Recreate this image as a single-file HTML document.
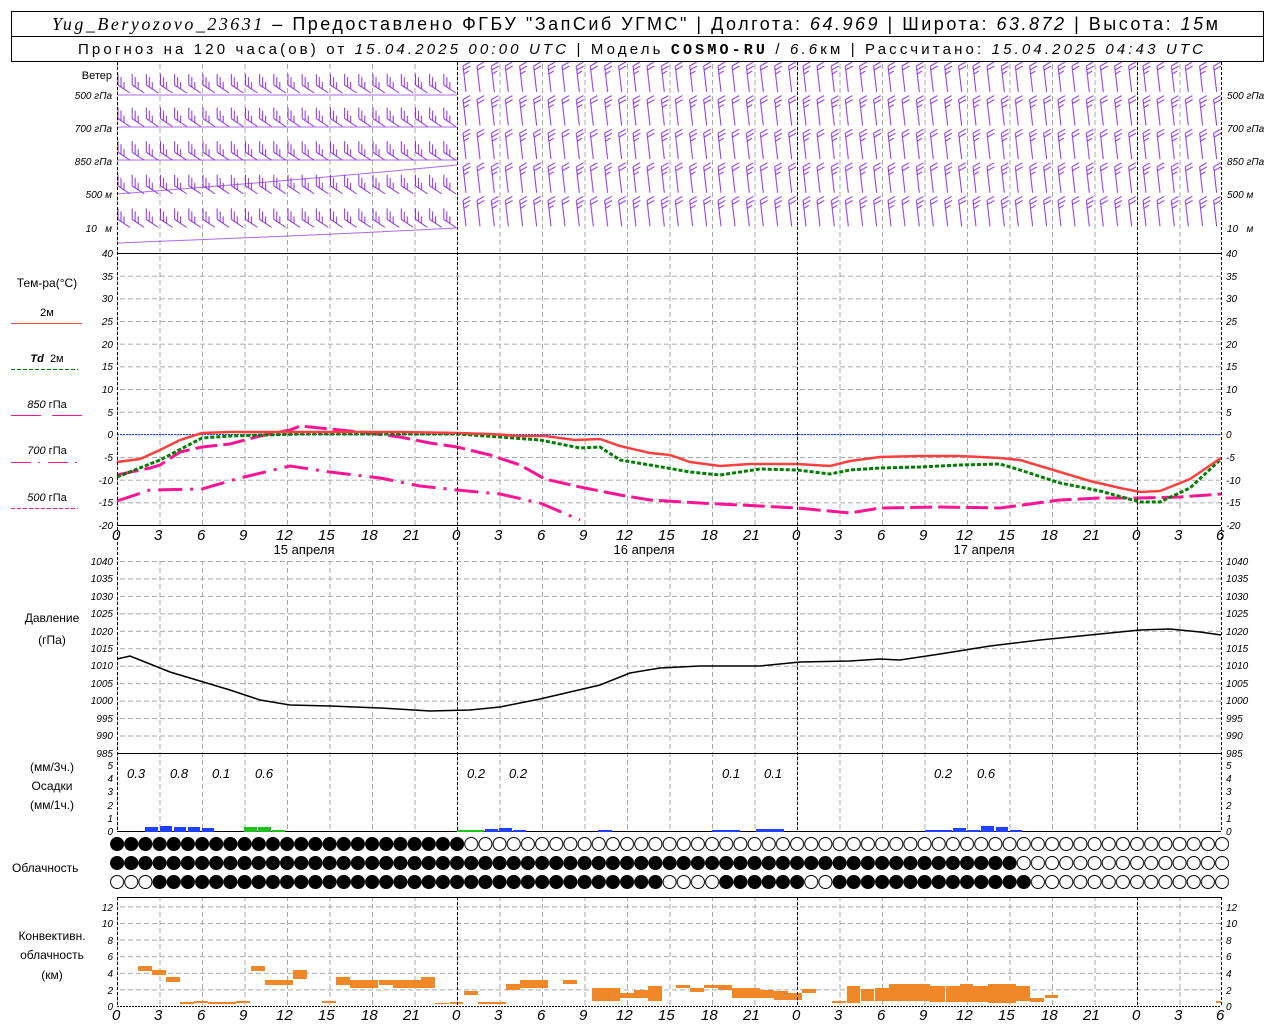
<!DOCTYPE html>
<html><head><meta charset="utf-8"><style>
html,body{margin:0;padding:0;background:#fff;}
svg{display:block;}
text{font-family:"Liberation Sans",sans-serif;fill:#000;}
.it{font-style:italic;}
.ax{font-size:10px;font-style:italic;}
.lb{font-size:12px;}
.hr{font-size:15px;font-style:italic;}
</style></head><body>
<svg width="1280" height="1024" viewBox="0 0 1280 1024" xmlns="http://www.w3.org/2000/svg">
<defs>
<pattern id="vg" x="117" y="0" width="42.5" height="8" patternUnits="userSpaceOnUse"><path d="M0.5 0V5" stroke="#aaa" stroke-width="1"/></pattern>
<pattern id="hgT" x="0" y="253" width="8" height="22.67" patternUnits="userSpaceOnUse"><path d="M0 0.5H5" stroke="#aaa"/></pattern>
<pattern id="hgP" x="0" y="561" width="8" height="17.45" patternUnits="userSpaceOnUse"><path d="M0 0.5H5" stroke="#aaa"/></pattern>
<pattern id="hgC" x="0" y="906.4" width="8" height="16.6" patternUnits="userSpaceOnUse"><path d="M0 0.5H5" stroke="#aaa"/></pattern>
<pattern id="wl" x="117" y="61" width="14.167" height="33.6" patternUnits="userSpaceOnUse"><path d="M13 32 L1 24 M1 24 V13 M4 26 V16 M7 28 V21" stroke="#8a2be2" fill="none" stroke-width="1"/></pattern>
<pattern id="wr" x="117" y="61" width="28.333" height="33.6" patternUnits="userSpaceOnUse"><path d="M9 31 L6 5 M6 5 l7 -4 M6.4 9 l7 -4 M6.8 13 l5 -3 M23 31 L20 5 M20 5 l7 -4 M20.4 9 l7 -4" stroke="#8a2be2" fill="none" stroke-width="1"/></pattern>
<pattern id="cw" x="110" y="834.5" width="14.1667" height="19" patternUnits="userSpaceOnUse"><circle cx="7.083" cy="9.5" r="6.5" fill="#fff" stroke="#000" stroke-width="1"/></pattern>
<pattern id="cb" x="110" y="834.5" width="14.1667" height="19" patternUnits="userSpaceOnUse"><circle cx="7.083" cy="9.5" r="6.8" fill="#000"/></pattern>
</defs>

<!-- header -->
<rect x="11.5" y="11.5" width="1252" height="50" fill="none" stroke="#000"/>
<line x1="11" y1="36.5" x2="1264" y2="36.5" stroke="#000"/>
<text x="52" y="30" font-size="18" textLength="1166" lengthAdjust="spacing"><tspan class="it" font-family="Liberation Serif">Yug_Beryozovo_23631</tspan> – Предоставлено ФГБУ "ЗапСиб УГМС" | Долгота: <tspan class="it">64.969</tspan> | Широта: <tspan class="it">63.872</tspan> | Высота: <tspan class="it">15</tspan>м</text>
<text x="78" y="54" font-size="15" textLength="1125" lengthAdjust="spacing">Прогноз на 120 часа(ов) от <tspan class="it">15.04.2025 00:00 UTC</tspan> | Модель <tspan font-weight="bold" font-family="Liberation Mono">COSMO-RU</tspan> / <tspan class="it">6.6</tspan>км | Рассчитано: <tspan class="it">15.04.2025 04:43 UTC</tspan></text>

<!-- wind panel -->
<rect x="117" y="62" width="1104" height="190" fill="url(#vg)"/>
<rect x="117" y="61" width="340" height="168" fill="url(#wl)"/>
<rect x="457" y="61" width="764" height="168" fill="url(#wr)"/>
<path d="M117 95 H457 M117 127 H457 M117 160 H457 M117 194 Q300 180 457 165 M117 243 Q300 236 457 228" stroke="#8a2be2" fill="none" opacity="0.7"/>
<g class="ax" text-anchor="end"><text x="112" y="79" font-style="normal" font-size="11">Ветер</text>
<text x="112" y="99">500 гПа</text><text x="112" y="132">700 гПа</text><text x="112" y="165">850 гПа</text><text x="112" y="198">500 м</text><text x="112" y="232">10&#160;&#160;&#160;м</text></g>
<g class="ax"><text x="1227" y="99">500 гПа</text><text x="1227" y="132">700 гПа</text><text x="1227" y="165">850 гПа</text><text x="1227" y="198">500 м</text><text x="1227" y="232">10&#160;&#160;&#160;м</text></g>

<!-- temperature panel -->
<rect x="117" y="253" width="1104" height="272" fill="url(#vg)"/>
<rect x="117" y="253" width="1104" height="272" fill="url(#hgT)"/>
<line x1="117" y1="253.5" x2="1221" y2="253.5" stroke="#000"/>
<line x1="117" y1="525.5" x2="1221" y2="525.5" stroke="#000"/>
<line x1="117" y1="434.5" x2="1221" y2="434.5" stroke="#2040ff" stroke-dasharray="2,1"/>
<g class="ax" text-anchor="end">
<text x="113" y="257">40</text><text x="113" y="280">35</text><text x="113" y="302">30</text><text x="113" y="325">25</text><text x="113" y="348">20</text><text x="113" y="370">15</text><text x="113" y="393">10</text><text x="113" y="416">5</text><text x="113" y="438">0</text><text x="113" y="461">-5</text><text x="113" y="484">-10</text><text x="113" y="506">-15</text><text x="113" y="529">-20</text></g>
<g class="ax">
<text x="1226" y="257">40</text><text x="1226" y="280">35</text><text x="1226" y="302">30</text><text x="1226" y="325">25</text><text x="1226" y="348">20</text><text x="1226" y="370">15</text><text x="1226" y="393">10</text><text x="1226" y="416">5</text><text x="1226" y="438">0</text><text x="1226" y="461">-5</text><text x="1226" y="484">-10</text><text x="1226" y="506">-15</text><text x="1226" y="529">-20</text></g>
<polyline fill="none" stroke="#ff1493" stroke-width="3" stroke-dasharray="22,6" points="117,475 150,468 160,465 180,452 202,447 230,444 260,436 290,430 300,426 330,429 360,432 400,437 430,443 457,447 490,455 520,465 545,479 580,487 620,495 650,500 700,503 760,506 797,508 850,513 880,508 940,507 1000,508 1060,500 1100,498 1140,498 1180,497 1221,494"/>
<polyline fill="none" stroke="#ff1493" stroke-width="3" stroke-dasharray="24,8,3,8" points="117,501 150,490 202,489 240,478 290,466 330,472 380,478 420,486 457,490 500,494 540,503 580,520"/>
<polyline fill="none" stroke="#008000" stroke-width="3" stroke-dasharray="4,2" points="117,477 160,460 202,438 230,436 300,434 400,434 457,434 500,437 540,440 580,448 600,447 620,460 650,465 690,472 720,475 760,469 797,470 830,474 850,470 880,468 920,467 960,465 1000,464 1020,470 1060,483 1100,491 1140,502 1160,502 1190,488 1221,459"/>
<polyline fill="none" stroke="#ff4040" stroke-width="2.5" points="117,462 140,459 160,450 180,440 202,433 230,432 300,432 400,432 457,433 490,434 520,436 545,436 575,440 600,439 620,446 650,453 670,455 690,462 720,466 750,464 797,464 830,466 850,461 880,457 920,456 960,456 1000,458 1020,460 1060,472 1090,481 1120,488 1140,492 1160,491 1190,479 1221,458"/>
<g class="hr"><text x="112" y="540">0</text><text x="154" y="540">3</text><text x="197" y="540">6</text><text x="239" y="540">9</text><text x="276" y="540">12</text><text x="318" y="540">15</text><text x="361" y="540">18</text><text x="403" y="540">21</text>
<text x="452" y="540">0</text><text x="494" y="540">3</text><text x="537" y="540">6</text><text x="579" y="540">9</text><text x="616" y="540">12</text><text x="658" y="540">15</text><text x="701" y="540">18</text><text x="743" y="540">21</text>
<text x="792" y="540">0</text><text x="834" y="540">3</text><text x="877" y="540">6</text><text x="919" y="540">9</text><text x="956" y="540">12</text><text x="998" y="540">15</text><text x="1041" y="540">18</text><text x="1083" y="540">21</text>
<text x="1132" y="540">0</text><text x="1174" y="540">3</text><text x="1216" y="540">6</text></g>
<g font-size="13" text-anchor="middle"><text x="304" y="554">15 апреля</text><text x="644" y="554">16 апреля</text><text x="984" y="554">17 апреля</text></g>
<!-- legend -->
<g class="lb" text-anchor="middle">
<text x="47" y="287">Тем-ра(°C)</text>
<text x="47" y="316" font-size="11">2м</text>
<text x="47" y="362" font-size="11"><tspan font-style="italic" font-weight="bold">Td</tspan>&#160;&#160;2м</text>
<text x="47" y="408" font-size="11"><tspan font-style="italic">850</tspan> гПа</text>
<text x="47" y="454" font-size="11"><tspan font-style="italic">700</tspan> гПа</text>
<text x="47" y="501" font-size="11"><tspan font-style="italic">500</tspan> гПа</text></g>
<line x1="11" y1="323.5" x2="82" y2="323.5" stroke="#ff4040"/>
<line x1="11" y1="369.5" x2="78" y2="369.5" stroke="#008000" stroke-dasharray="4,2"/>
<path d="M11 415.5H41 M52 415.5H82" stroke="#ff1493"/>
<path d="M11 462.5H31 M38 462.5H40 M48 462.5H68 M75 462.5H77" stroke="#ff1493"/>
<line x1="11" y1="508.5" x2="78" y2="508.5" stroke="#ff1493" stroke-dasharray="4,2"/>

<!-- pressure panel -->
<rect x="117" y="561" width="1104" height="192" fill="url(#vg)"/>
<rect x="117" y="561" width="1104" height="192" fill="url(#hgP)"/>
<line x1="117" y1="753.5" x2="1221" y2="753.5" stroke="#000"/>
<g class="ax" text-anchor="end">
<text x="113" y="565">1040</text><text x="113" y="582">1035</text><text x="113" y="600">1030</text><text x="113" y="617">1025</text><text x="113" y="635">1020</text><text x="113" y="652">1015</text><text x="113" y="669">1010</text><text x="113" y="687">1005</text><text x="113" y="704">1000</text><text x="113" y="722">995</text><text x="113" y="739">990</text><text x="113" y="757">985</text></g>
<g class="ax">
<text x="1226" y="565">1040</text><text x="1226" y="582">1035</text><text x="1226" y="600">1030</text><text x="1226" y="617">1025</text><text x="1226" y="635">1020</text><text x="1226" y="652">1015</text><text x="1226" y="669">1010</text><text x="1226" y="687">1005</text><text x="1226" y="704">1000</text><text x="1226" y="722">995</text><text x="1226" y="739">990</text><text x="1226" y="757">985</text></g>
<polyline fill="none" stroke="#000" stroke-width="1.5" points="117,659 130,656 150,664 170,672 200,681 230,690 260,700 290,705 330,706 380,708 430,711 470,710 500,707 540,699 600,685 630,673 660,668 700,666 760,666 800,662 850,661 880,659 900,660 940,654 990,646 1040,640 1100,634 1140,630 1170,629 1200,632 1221,635"/>
<g class="lb" text-anchor="middle"><text x="52" y="622">Давление</text><text x="52" y="644">(гПа)</text></g>

<!-- precip panel -->
<rect x="117" y="754" width="1104" height="77" fill="url(#vg)"/>
<line x1="117" y1="831.5" x2="1221" y2="831.5" stroke="#000"/>
<g class="ax" text-anchor="end"><text x="113" y="769">5</text><text x="113" y="782">4</text><text x="113" y="795">3</text><text x="113" y="809">2</text><text x="113" y="822">1</text><text x="113" y="835">0</text></g>
<g class="ax"><text x="1226" y="769">5</text><text x="1226" y="782">4</text><text x="1226" y="795">3</text><text x="1226" y="809">2</text><text x="1226" y="822">1</text><text x="1226" y="835">0</text></g>
<g class="lb" text-anchor="middle"><text x="52" y="771">(мм/3ч.)</text><text x="52" y="790">Осадки</text><text x="52" y="809">(мм/1ч.)</text></g>
<g class="it" font-size="13"><text x="127" y="778">0.3</text><text x="170" y="778">0.8</text><text x="212" y="778">0.1</text><text x="255" y="778">0.6</text><text x="467" y="778">0.2</text><text x="509" y="778">0.2</text><text x="722" y="778">0.1</text><text x="764" y="778">0.1</text><text x="934" y="778">0.2</text><text x="977" y="778">0.6</text></g>
<g fill="#2040ff">
<rect x="145" y="827" width="13" height="5"/><rect x="160" y="826" width="12" height="6"/><rect x="174" y="827" width="12" height="5"/><rect x="188" y="827" width="12" height="5"/><rect x="202" y="828" width="12" height="4"/>
<rect x="485" y="829" width="13" height="3"/><rect x="499" y="828" width="13" height="4"/><rect x="513" y="830" width="13" height="2"/>
<rect x="598" y="830" width="14" height="2"/><rect x="712" y="830" width="28" height="2"/><rect x="756" y="829" width="28" height="3"/>
<rect x="925" y="830" width="27" height="2"/><rect x="953" y="828" width="13" height="4"/><rect x="967" y="830" width="13" height="2"/><rect x="981" y="826" width="13" height="6"/><rect x="996" y="827" width="12" height="5"/><rect x="1010" y="830" width="12" height="2"/></g>
<g fill="#20c020"><rect x="244" y="827" width="13" height="5"/><rect x="258" y="827" width="13" height="5"/><rect x="272" y="830" width="13" height="2"/><rect x="457" y="830" width="27" height="2"/></g>

<!-- clouds -->
<rect x="110" y="834.5" width="1119" height="57" fill="url(#cw)"/>
<g fill="url(#cb)">
<rect x="110" y="834.5" width="354.2" height="19"/>
<rect x="110" y="853.5" width="906.7" height="19"/>
<rect x="152.5" y="872.5" width="510" height="19"/>
<rect x="719.2" y="872.5" width="85" height="19"/>
<rect x="832.5" y="872.5" width="198" height="19"/></g>
<text x="12" y="872" class="lb">Облачность</text>

<!-- convective panel -->
<rect x="117" y="897" width="1104" height="110" fill="url(#vg)"/>
<rect x="117" y="906" width="1104" height="100" fill="url(#hgC)"/>
<line x1="117" y1="897.5" x2="1221" y2="897.5" stroke="#000"/>
<line x1="117" y1="1006.5" x2="1221" y2="1006.5" stroke="#000" stroke-dasharray="2,1"/>
<g class="ax" text-anchor="end"><text x="113" y="911">12</text><text x="113" y="927">10</text><text x="113" y="944">8</text><text x="113" y="960">6</text><text x="113" y="977">4</text><text x="113" y="994">2</text><text x="113" y="1010">0</text></g>
<g class="ax"><text x="1226" y="911">12</text><text x="1226" y="927">10</text><text x="1226" y="944">8</text><text x="1226" y="960">6</text><text x="1226" y="977">4</text><text x="1226" y="994">2</text><text x="1226" y="1010">0</text></g>
<g class="lb" text-anchor="middle"><text x="52" y="940">Конвективн.</text><text x="52" y="959">облачность</text><text x="52" y="979">(км)</text></g>
<g fill="#f0882a">
<rect x="138" y="966" width="14" height="5"/><rect x="152" y="970" width="14" height="5"/><rect x="166" y="977" width="14" height="5"/><rect x="180" y="1002" width="14" height="2"/><rect x="194" y="1001" width="14" height="2"/><rect x="208" y="1002" width="28" height="2"/><rect x="236" y="1001" width="14" height="2"/>
<rect x="251" y="966" width="14" height="5"/><rect x="265" y="980" width="28" height="5"/><rect x="293" y="970" width="14" height="9"/><rect x="322" y="1001" width="14" height="2"/><rect x="336" y="977" width="14" height="8"/><rect x="350" y="980" width="28" height="8"/><rect x="379" y="980" width="14" height="5"/><rect x="393" y="980" width="28" height="8"/><rect x="421" y="977" width="14" height="11"/><rect x="435" y="1003" width="14" height="1"/><rect x="450" y="1002" width="13" height="2"/><rect x="464" y="991" width="14" height="4"/><rect x="478" y="1002" width="28" height="2"/><rect x="506" y="984" width="14" height="6"/><rect x="520" y="980" width="28" height="8"/><rect x="563" y="980" width="14" height="4"/>
<rect x="592" y="988" width="28" height="13"/><rect x="620" y="993" width="14" height="5"/><rect x="634" y="990" width="14" height="8"/><rect x="648" y="986" width="14" height="15"/><rect x="676" y="985" width="14" height="3"/><rect x="690" y="988" width="14" height="4"/><rect x="704" y="985" width="14" height="3"/><rect x="718" y="985" width="14" height="5"/><rect x="732" y="988" width="28" height="10"/><rect x="760" y="990" width="14" height="8"/><rect x="774" y="991" width="14" height="9"/><rect x="788" y="993" width="14" height="7"/><rect x="802" y="989" width="14" height="4"/>
<rect x="832" y="1001" width="14" height="2"/><rect x="847" y="986" width="13" height="17"/><rect x="861" y="989" width="13" height="12"/><rect x="875" y="988" width="14" height="13"/><rect x="889" y="984" width="41" height="17"/><rect x="930" y="986" width="15" height="16"/><rect x="946" y="986" width="14" height="16"/><rect x="960" y="984" width="13" height="18"/><rect x="973" y="986" width="15" height="16"/><rect x="988" y="984" width="28" height="19"/><rect x="1016" y="986" width="14" height="15"/><rect x="1030" y="998" width="14" height="4"/><rect x="1045" y="995" width="13" height="3"/><rect x="1216" y="1001" width="5" height="2"/></g>
<g class="hr"><text x="112" y="1020">0</text><text x="154" y="1020">3</text><text x="197" y="1020">6</text><text x="239" y="1020">9</text><text x="276" y="1020">12</text><text x="318" y="1020">15</text><text x="361" y="1020">18</text><text x="403" y="1020">21</text>
<text x="452" y="1020">0</text><text x="494" y="1020">3</text><text x="537" y="1020">6</text><text x="579" y="1020">9</text><text x="616" y="1020">12</text><text x="658" y="1020">15</text><text x="701" y="1020">18</text><text x="743" y="1020">21</text>
<text x="792" y="1020">0</text><text x="834" y="1020">3</text><text x="877" y="1020">6</text><text x="919" y="1020">9</text><text x="956" y="1020">12</text><text x="998" y="1020">15</text><text x="1041" y="1020">18</text><text x="1083" y="1020">21</text>
<text x="1132" y="1020">0</text><text x="1174" y="1020">3</text><text x="1216" y="1020">6</text></g>

<!-- axes & day lines -->
<g stroke="#000" stroke-dasharray="3,2">
<path d="M117.5 62V832 M117.5 897V1007 M1221.5 62V832 M1221.5 897V1007"/>
<path d="M457.5 62V832 M457.5 897V1007 M797.5 62V832 M797.5 897V1007 M1137.5 62V832 M1137.5 897V1007"/></g>
</svg>
</body></html>
